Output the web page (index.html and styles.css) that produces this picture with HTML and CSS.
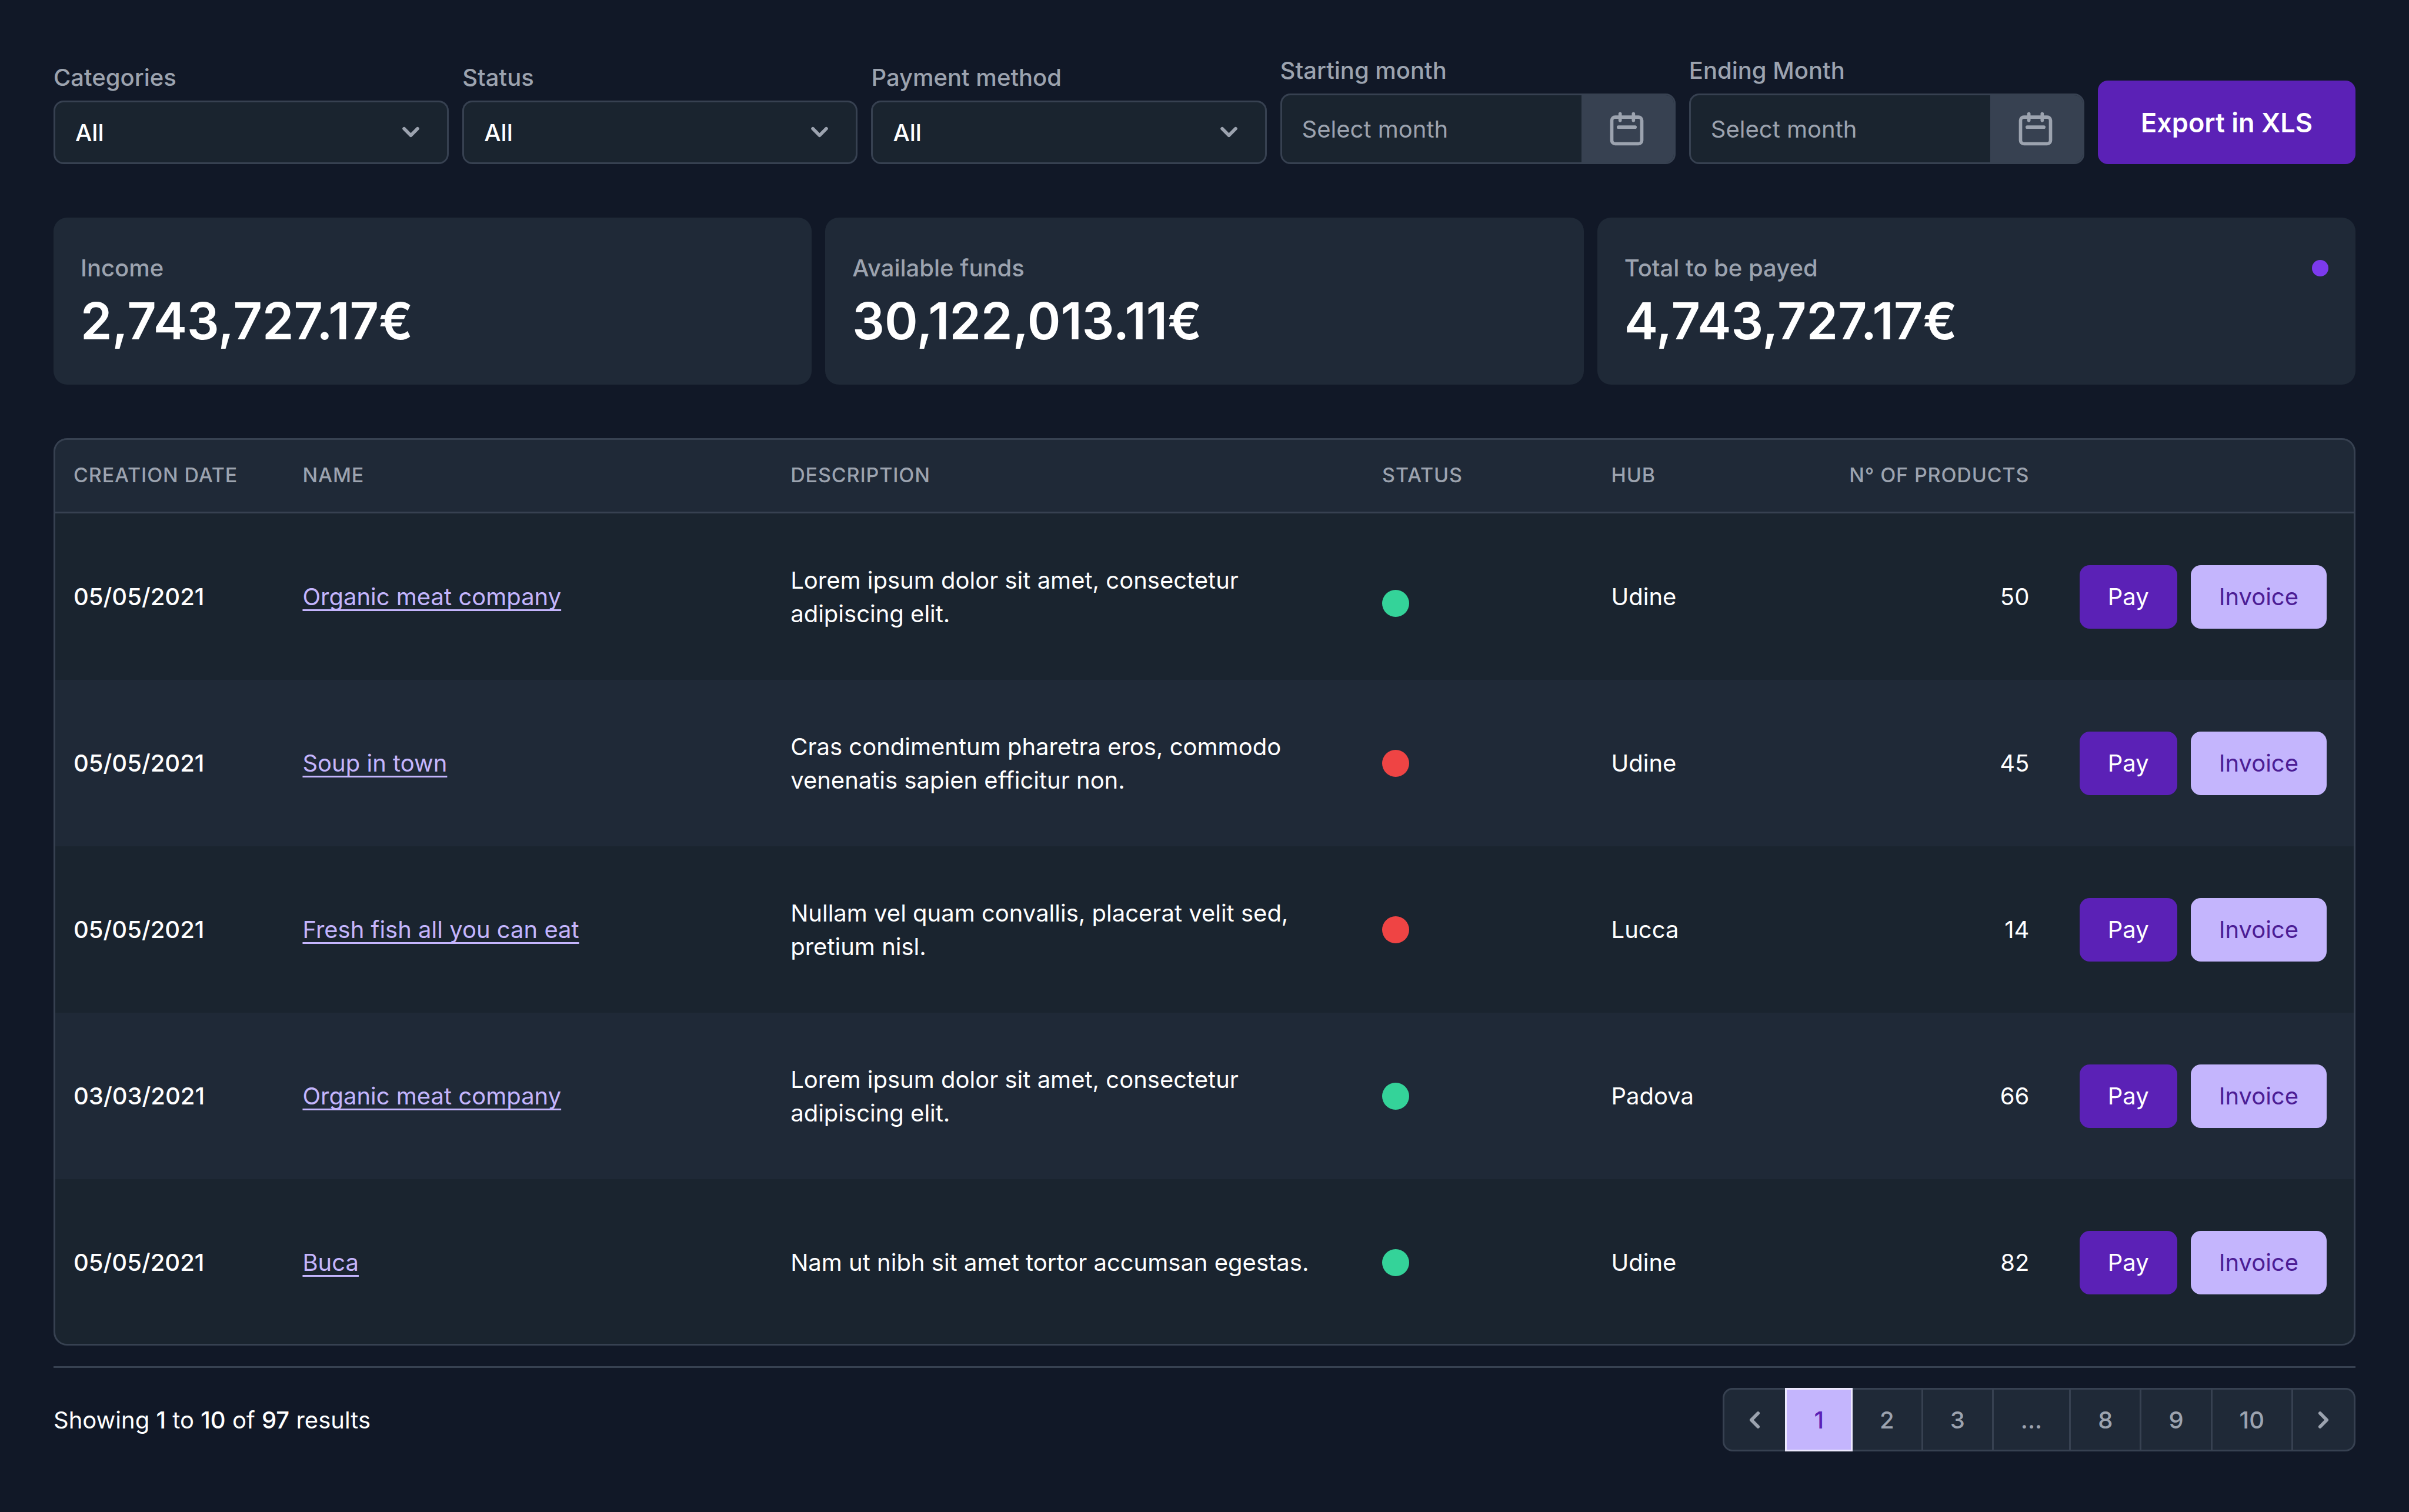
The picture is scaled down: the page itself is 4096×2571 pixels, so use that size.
FILE: index.html
```html
<!DOCTYPE html>
<html lang="en">
<head>
<meta charset="utf-8">
<meta name="viewport" content="width=device-width, initial-scale=1">
<title>Payments</title>
<link rel="stylesheet" href="styles.css">
</head>
<body>
<svg class="sprite" aria-hidden="true">
  <symbol id="chevron-down" viewBox="0 0 20 20"><path fill="currentColor" fill-rule="evenodd" clip-rule="evenodd" d="M5.293 7.293a1 1 0 011.414 0L10 10.586l3.293-3.293a1 1 0 111.414 1.414l-4 4a1 1 0 01-1.414 0l-4-4a1 1 0 010-1.414z"/></symbol>
  <symbol id="chevron-left" viewBox="0 0 20 20"><path fill="currentColor" fill-rule="evenodd" clip-rule="evenodd" d="M12.707 5.293a1 1 0 010 1.414L9.414 10l3.293 3.293a1 1 0 01-1.414 1.414l-4-4a1 1 0 010-1.414l4-4a1 1 0 011.414 0z"/></symbol>
  <symbol id="chevron-right" viewBox="0 0 20 20"><path fill="currentColor" fill-rule="evenodd" clip-rule="evenodd" d="M7.293 14.707a1 1 0 010-1.414L10.586 10 7.293 6.707a1 1 0 011.414-1.414l4 4a1 1 0 010 1.414l-4 4a1 1 0 01-1.414 0z"/></symbol>
  <symbol id="calendar" viewBox="0 0 24 24"><path fill="none" stroke="currentColor" stroke-width="2" stroke-linecap="round" stroke-linejoin="round" d="M8 3v4M16 3v4M7 11h10M5 21h14a2 2 0 002-2V7a2 2 0 00-2-2H5a2 2 0 00-2 2v12a2 2 0 002 2z"/></symbol>
</svg>
<main class="page">
  <form class="filters">
    <div class="field">
      <label class="label" for="categories">Categories</label>
      <div class="select-wrap">
        <select class="select" id="categories"><option>All</option></select>
        <svg class="icon select-icon" aria-hidden="true"><use href="#chevron-down"/></svg>
      </div>
    </div>
    <div class="field">
      <label class="label" for="status">Status</label>
      <div class="select-wrap">
        <select class="select" id="status"><option>All</option></select>
        <svg class="icon select-icon" aria-hidden="true"><use href="#chevron-down"/></svg>
      </div>
    </div>
    <div class="field">
      <label class="label" for="method">Payment method</label>
      <div class="select-wrap">
        <select class="select" id="method"><option>All</option></select>
        <svg class="icon select-icon" aria-hidden="true"><use href="#chevron-down"/></svg>
      </div>
    </div>
    <div class="field">
      <label class="label" for="start">Starting month</label>
      <div class="month">
        <input class="month-input" id="start" type="text" placeholder="Select month">
        <button class="month-button" type="button" aria-label="Pick starting month"><svg class="icon-large" aria-hidden="true"><use href="#calendar"/></svg></button>
      </div>
    </div>
    <div class="field">
      <label class="label" for="end">Ending Month</label>
      <div class="month">
        <input class="month-input" id="end" type="text" placeholder="Select month">
        <button class="month-button" type="button" aria-label="Pick ending month"><svg class="icon-large" aria-hidden="true"><use href="#calendar"/></svg></button>
      </div>
    </div>
    <button class="export" type="button">Export in XLS</button>
  </form>

  <section class="cards">
    <article class="card">
      <div class="card-head"><h2 class="card-title">Income</h2></div>
      <p class="card-value">2,743,727.17€</p>
    </article>
    <article class="card">
      <div class="card-head"><h2 class="card-title">Available funds</h2></div>
      <p class="card-value">30,122,013.11€</p>
    </article>
    <article class="card">
      <div class="card-head"><h2 class="card-title">Total to be payed</h2><span class="card-dot"></span></div>
      <p class="card-value">4,743,727.17€</p>
    </article>
  </section>

  <div class="table-frame">
    <table class="table">
      <colgroup>
        <col class="col-date"><col class="col-name"><col class="col-desc"><col class="col-status"><col class="col-hub"><col class="col-count"><col>
      </colgroup>
      <thead>
        <tr><th>Creation date</th><th>Name</th><th>Description</th><th>Status</th><th>Hub</th><th class="number">N° of products</th><th></th></tr>
      </thead>
      <tbody>
        <tr>
          <td class="date">05/05/2021</td>
          <td><a class="link" href="#">Organic meat company</a></td>
          <td>Lorem ipsum dolor sit amet, consectetur adipiscing elit.</td>
          <td class="status-low"><span class="dot dot-green"></span></td>
          <td>Udine</td>
          <td class="number">50</td>
          <td class="actions-cell"><div class="actions"><button class="button pay" type="button">Pay</button><button class="button invoice" type="button">Invoice</button></div></td>
        </tr>
        <tr>
          <td class="date">05/05/2021</td>
          <td><a class="link" href="#">Soup in town</a></td>
          <td>Cras condimentum pharetra eros, commodo venenatis sapien efficitur non.</td>
          <td><span class="dot dot-red"></span></td>
          <td>Udine</td>
          <td class="number">45</td>
          <td class="actions-cell"><div class="actions"><button class="button pay" type="button">Pay</button><button class="button invoice" type="button">Invoice</button></div></td>
        </tr>
        <tr>
          <td class="date">05/05/2021</td>
          <td><a class="link" href="#">Fresh fish all you can eat</a></td>
          <td>Nullam vel quam convallis, placerat velit sed, pretium nisl.</td>
          <td><span class="dot dot-red"></span></td>
          <td>Lucca</td>
          <td class="number">14</td>
          <td class="actions-cell"><div class="actions"><button class="button pay" type="button">Pay</button><button class="button invoice" type="button">Invoice</button></div></td>
        </tr>
        <tr>
          <td class="date">03/03/2021</td>
          <td><a class="link" href="#">Organic meat company</a></td>
          <td>Lorem ipsum dolor sit amet, consectetur adipiscing elit.</td>
          <td><span class="dot dot-green"></span></td>
          <td>Padova</td>
          <td class="number">66</td>
          <td class="actions-cell"><div class="actions"><button class="button pay" type="button">Pay</button><button class="button invoice" type="button">Invoice</button></div></td>
        </tr>
        <tr>
          <td class="date">05/05/2021</td>
          <td><a class="link" href="#">Buca</a></td>
          <td>Nam ut nibh sit amet tortor accumsan egestas.</td>
          <td><span class="dot dot-green"></span></td>
          <td>Udine</td>
          <td class="number">82</td>
          <td class="actions-cell"><div class="actions"><button class="button pay" type="button">Pay</button><button class="button invoice" type="button">Invoice</button></div></td>
        </tr>
      </tbody>
    </table>
  </div>

  <footer class="footer">
    <p class="summary">Showing <b>1</b> to <b>10</b> of <b>97</b> results</p>
    <nav class="pagination" aria-label="Pagination">
      <a class="page-link page-step" href="#" aria-label="Previous"><svg class="icon" aria-hidden="true"><use href="#chevron-left"/></svg></a>
      <a class="page-link current" href="#" aria-current="page">1</a>
      <a class="page-link" href="#">2</a>
      <a class="page-link" href="#">3</a>
      <span class="page-link">...</span>
      <a class="page-link" href="#">8</a>
      <a class="page-link" href="#">9</a>
      <a class="page-link" href="#">10</a>
      <a class="page-link page-step" href="#" aria-label="Next"><svg class="icon" aria-hidden="true"><use href="#chevron-right"/></svg></a>
    </nav>
  </footer>
</main>
</body>
</html>
```
FILE: styles.css
```css
:root {
  --bg: #111827;
  --panel: #1f2937;
  --field: #1a242f;
  --line: #374151;
  --muted: #9ca3af;
  --purple: #5b21b6;
  --lilac: #c4b5fd;
}

*, *::before, *::after { box-sizing: border-box; }

body {
  margin: 0;
  background: var(--bg);
  color: #fff;
  font-family: Inter, "Liberation Sans", sans-serif;
  font-size: 40px;
  font-optical-sizing: none;
  line-height: 57px;
}

h2, p { margin: 0; }
button, input, select { font: inherit; color: inherit; margin: 0; }
button { cursor: pointer; border: 0; }
.sprite { display: none; }
.icon { display: block; width: 57px; height: 57px; color: var(--muted); }
.icon-large { display: block; width: 68px; height: 68px; color: var(--muted); }

.page { padding: 91px; }

/* Filters */
.filters { display: flex; align-items: flex-end; gap: 23px; }
.field { flex: 1 1 0; min-width: 0; }
.label { display: block; margin-bottom: 11px; color: var(--muted); font-weight: 500; }
.select-wrap { position: relative; }
.select {
  display: block;
  width: 100%;
  height: 108px;
  padding: 0 34px;
  appearance: none;
  background: var(--field);
  border: 3px solid var(--line);
  border-radius: 17px;
  font-weight: 500;
}
.select-icon { position: absolute; top: 25px; right: 36px; pointer-events: none; }
.month {
  display: flex;
  height: 120px;
  overflow: hidden;
  background: var(--field);
  border: 3px solid var(--line);
  border-radius: 17px;
}
.month-input { flex: 1; min-width: 0; padding: 0 34px; background: none; border: 0; }
.month-input::placeholder { color: var(--muted); opacity: 1; }
.month-button { display: grid; align-items: center; padding: 0 46px 0 43px; background: var(--line); }
.export {
  height: 142px;
  width: 438px;
  padding: 0;
  background: var(--purple);
  border-radius: 17px;
  font-size: 45px;
  font-weight: 600;
}

/* Totals */
.cards { display: grid; grid-template-columns: repeat(3, 1fr); gap: 23px; margin-top: 91px; }
.card { padding: 57px 46px; background: var(--panel); border-radius: 23px; }
.card-head { display: flex; align-items: center; justify-content: space-between; }
.card-title { font-size: 40px; font-weight: 500; color: var(--muted); }
.card-dot { width: 28px; height: 28px; border-radius: 50%; background: #7c3aed; }
.card-value { margin-top: 11px; font-size: 86px; line-height: 102px; font-weight: 600; }

/* Table */
.table-frame {
  margin-top: 91px;
  overflow: hidden;
  border-radius: 23px;
  outline: 3px solid var(--line);
  outline-offset: -3px;
}
.table { width: 100%; table-layout: fixed; border-collapse: separate; border-spacing: 0; }
.col-date, .col-status, .col-hub { width: 9.95%; }
.col-name { width: 21.2%; }
.col-desc { width: 25.7%; }
.col-count { width: 9.95%; }
th {
  height: 128px;
  padding: 0 34px;
  background: var(--panel);
  border-bottom: 3px solid var(--line);
  color: var(--muted);
  font-size: 34px;
  font-weight: 500;
  letter-spacing: 0.025em;
  text-align: left;
  text-transform: uppercase;
  white-space: nowrap;
}
td { height: 283px; padding: 0 34px; background: var(--field); }
tbody tr:nth-child(even) td { background: var(--panel); }
.number { text-align: right; }
.date { font-weight: 500; }
.link {
  color: var(--lilac);
  text-decoration: underline 3px;
  text-decoration-skip-ink: none;
  text-underline-offset: 7px;
}
.dot { display: block; width: 46px; height: 46px; border-radius: 50%; }
.dot-green { background: #34d399; }
.dot-red { background: #ef4444; }
.status-low { padding-top: 23px; }
.actions-cell { padding: 0 49px 0 0; }
.actions { display: flex; justify-content: flex-end; gap: 23px; }
.button { height: 108px; padding: 0 48px; border-radius: 17px; }
.pay { background: var(--purple); }
.invoice { background: var(--lilac); color: #4c1d95; }

/* Footer */
.footer {
  display: flex;
  align-items: center;
  justify-content: space-between;
  margin-top: 35px;
  padding-top: 34px;
  border-top: 3px solid var(--line);
}
.summary b { font-weight: 500; }
.pagination { display: flex; }
.page-link {
  display: flex;
  align-items: center;
  height: 108px;
  padding: 0 46px;
  background: var(--panel);
  border: 3px solid var(--line);
  color: var(--muted);
  font-weight: 500;
  text-decoration: none;
}
.page-link + .page-link { margin-left: -3px; }
.page-step { padding: 0 23px; }
.page-link:first-child { border-radius: 17px 0 0 17px; }
.page-link:last-child { border-radius: 0 17px 17px 0; }
.page-link.current { z-index: 1; background: var(--lilac); border-color: #ede9fe; color: var(--purple); }
```
